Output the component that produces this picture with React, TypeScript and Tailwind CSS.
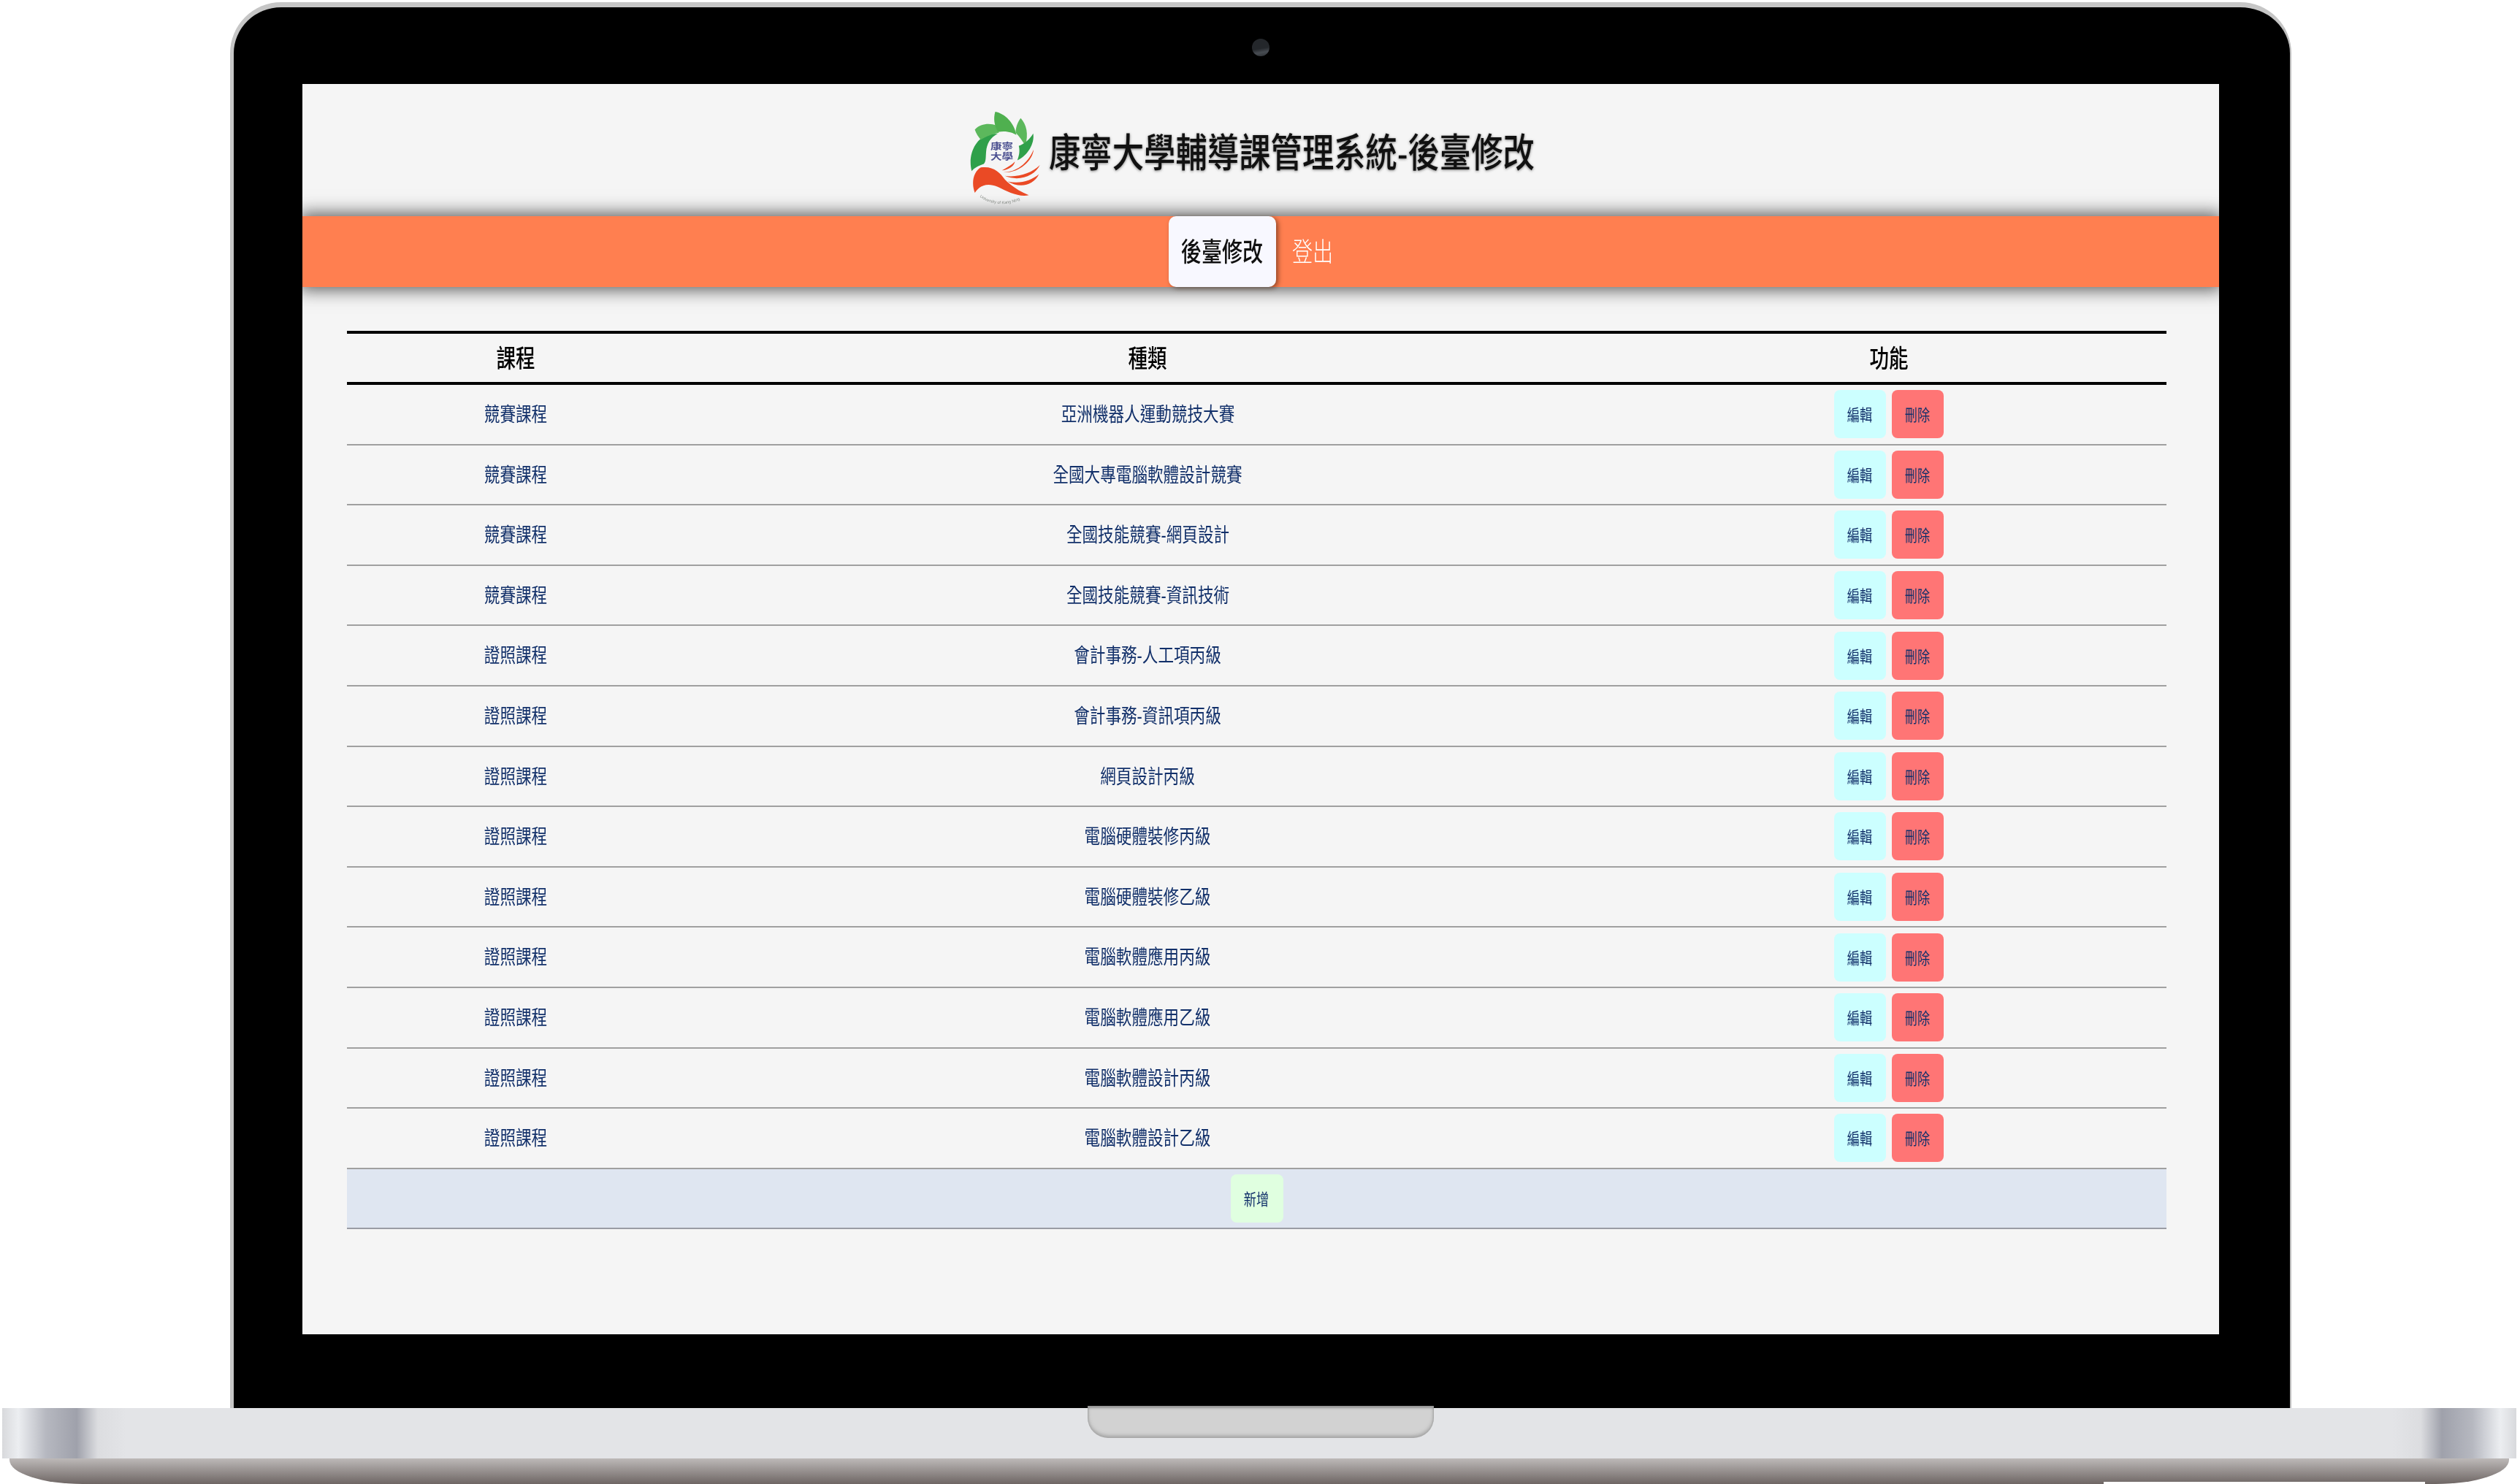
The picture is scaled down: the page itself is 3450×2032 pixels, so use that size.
const FONT = "font-['Liberation_Sans','Noto_Sans_CJK_TC',sans-serif]";

const rows: [string, string][] = [
  ["競賽課程", "亞洲機器人運動競技大賽"],
  ["競賽課程", "全國大專電腦軟體設計競賽"],
  ["競賽課程", "全國技能競賽-網頁設計"],
  ["競賽課程", "全國技能競賽-資訊技術"],
  ["證照課程", "會計事務-人工項丙級"],
  ["證照課程", "會計事務-資訊項丙級"],
  ["證照課程", "網頁設計丙級"],
  ["證照課程", "電腦硬體裝修丙級"],
  ["證照課程", "電腦硬體裝修乙級"],
  ["證照課程", "電腦軟體應用丙級"],
  ["證照課程", "電腦軟體應用乙級"],
  ["證照課程", "電腦軟體設計丙級"],
  ["證照課程", "電腦軟體設計乙級"],
];

function Logo() {
  return (
    <svg viewBox="55 35 295 410" className="mt-[37px] h-[135px] w-[97px] shrink-0 blur-[0.6px]">
      <path d="M62 285 C45 220 75 150 135 130 L170 130 C140 145 125 170 122 205 C120 230 122 245 112 255 C90 262 72 272 62 285 Z" fill="#2fa04a" />
      <path d="M75 112 C100 85 140 85 165 95 L175 125 C150 130 120 140 100 155 C90 142 80 128 75 112 Z" fill="#5cb85c" />
      <path d="M160 38 C200 45 240 85 248 135 C235 125 205 115 172 122 C155 95 152 65 160 38 Z" fill="#4fb04f" />
      <path d="M266 64 C290 90 300 130 285 180 C275 160 260 140 245 125 C245 105 252 82 266 64 Z" fill="#5cb85c" />
      <path d="M318 128 C325 170 295 220 252 240 C262 215 262 195 258 180 C285 170 305 150 318 128 Z" fill="#2fa04a" />
      <path d="M75 375 C58 330 72 285 100 270 C150 262 180 290 200 320 C225 345 260 370 300 385 C260 395 210 370 170 350 C130 335 100 340 75 375 Z" fill="#ea4a25" />
      <path d="M188 282 C215 280 240 262 242 245 C230 258 208 270 188 282 Z" fill="#ea4a25" />
      <path d="M192 290 C245 290 295 255 320 195 C315 245 255 295 192 290 Z" fill="#ea4a25" />
      <path d="M200 305 C255 312 310 295 346 260 C325 305 260 330 200 305 Z" fill="#ea4a25" />
      <path d="M212 328 C262 340 310 325 342 298 C320 345 262 358 212 328 Z" fill="#ea4a25" />
      <text x="140" y="195" fontSize="38" textLength="95" lengthAdjust="spacingAndGlyphs" fill="#4a4f90" fontFamily="'Noto Sans CJK TC',sans-serif" fontWeight="700">康寧</text>
      <text x="140" y="238" fontSize="38" textLength="95" lengthAdjust="spacingAndGlyphs" fill="#4a4f90" fontFamily="'Noto Sans CJK TC',sans-serif" fontWeight="700">大學</text>
      <path id="logoArc" d="M95 392 C140 430 240 435 292 384" fill="none" />
      <text fontSize="17" fill="#8a8f8a" fontFamily="'Liberation Sans',sans-serif">
        <textPath href="#logoArc">University of Kang Ning</textPath>
      </text>
    </svg>
  );
}

function Squeezed({ className, children }: { className: string; children: string }) {
  return <span className={`inline-block whitespace-nowrap ${className}`}>{children}</span>;
}

function ActionButton({ className, label }: { className: string; label: string }) {
  return (
    <button className={`flex h-[66px] w-[71px] shrink-0 items-center justify-center overflow-hidden rounded-[8px] pt-[4px] ${className}`}>
      <Squeezed className="scale-x-[0.78] text-[22px] leading-none text-[#12306a] blur-[0.4px]">{label}</Squeezed>
    </button>
  );
}

function Row({ course, kind }: { course: string; kind: string }) {
  return (
    <div className="grid h-[82.6px] grid-cols-[462px_1268px_761px] items-center border-b-2 border-[#a0a0a0]">
      <div className="pt-[2px] text-center">
        <Squeezed className="scale-x-[0.8] text-[27px] text-[#12306a] blur-[0.3px]">{course}</Squeezed>
      </div>
      <div className="pt-[2px] text-center">
        <Squeezed className="scale-x-[0.8] text-[27px] text-[#12306a] blur-[0.3px]">{kind}</Squeezed>
      </div>
      <div className="flex justify-center gap-[8px]">
        <ActionButton className="bg-[#ccffff]" label="編輯" />
        <ActionButton className="bg-[#ff7575]" label="刪除" />
      </div>
    </div>
  );
}

export default function App() {
  return (
    <div className={`h-[2032px] w-[3450px] overflow-hidden bg-white ${FONT}`}>
      <div className="ml-[315px] mt-[3px] h-[1925px] w-[2822px] rounded-t-[70px] border-x-[5px] border-t-[7px] border-[#c6c6c6] border-r-2 border-r-[#bdbdbd] bg-black pl-[94px] pt-[105px]">
        <div className="relative w-[2624px]">
          <div className="absolute left-1/2 top-[-62px] h-[24px] w-[24px] -translate-x-1/2 rounded-full bg-[linear-gradient(170deg,#24272b_55%,#474c52_75%,#2c2f33)]" />
        </div>
        <div className="h-[1712px] w-[2624px] overflow-hidden bg-[#f5f5f5]">
          <header className="flex h-[181px] items-start justify-center pr-[25px]">
            <Logo />
            <div className="ml-[11px] mt-[68px] w-[663px]">
              <span className="inline-block origin-left scale-x-[0.803] whitespace-nowrap text-[54px] font-medium leading-none text-[#111] blur-[0.4px] [text-shadow:0_1px_4px_#777]">
                康寧大學輔導課管理系統-後臺修改
              </span>
            </div>
          </header>
          <nav className="flex h-[97px] justify-center bg-[#ff7f50] pr-[5px] shadow-[0_0_22px_4px_rgba(40,40,40,0.75)]">
            <div className="flex w-[147px] items-center justify-center overflow-hidden rounded-[10px] bg-[#f8f8ff] pt-[2px] shadow-[3px_2px_6px_rgba(60,30,10,0.55)]">
              <Squeezed className="scale-x-[0.78] text-[36px] font-medium text-[#111] blur-[0.3px]">後臺修改</Squeezed>
            </div>
            <div className="flex w-[100px] items-center justify-center pt-[2px]">
              <Squeezed className="scale-x-[0.78] text-[36px] font-light text-white blur-[0.3px]">登出</Squeezed>
            </div>
          </nav>
          <main className="ml-[61px] mt-[60px] w-[2491px]">
            <div className="grid h-[74px] grid-cols-[462px_1268px_761px] items-center border-y-4 border-black pt-[2px]">
              <div className="text-center"><Squeezed className="scale-x-[0.78] text-[34px] font-medium text-black">課程</Squeezed></div>
              <div className="text-center"><Squeezed className="scale-x-[0.78] text-[34px] font-medium text-black">種類</Squeezed></div>
              <div className="text-center"><Squeezed className="scale-x-[0.78] text-[34px] font-medium text-black">功能</Squeezed></div>
            </div>
            {rows.map(([course, kind], i) => (
              <Row key={i} course={course} kind={kind} />
            ))}
            <div className="flex h-[82px] items-center justify-center border-b-2 border-[#9a9ca4] bg-[#dfe6f1]">
              <ActionButton className="w-[72px] bg-[#e0ffe0]" label="新增" />
            </div>
          </main>
        </div>
      </div>
      <div className="relative ml-[3px] h-[104px] w-[3442px]">
        <div className="h-[69px] bg-[linear-gradient(90deg,#d8d9dc_0px,#eceef1_22px,#b6b8c0_60px,#9fa1ab_102px,#dcdde0_131px,#e3e4e7_170px,#e3e4e7_3272px,#dcdde0_3311px,#9fa1ab_3340px,#b6b8c0_3382px,#eceef1_3420px,#d8d9dc_3442px)]" />
        <div className="mx-[10px] h-[35px] rounded-b-[100px_33px] bg-[linear-gradient(180deg,#bdb9b8,#6e6664)]" />
        <div className="absolute left-[1486px] top-[-3px] h-[44px] w-[474px] rounded-b-[28px] bg-[#d2d2d2] shadow-[inset_0_-3px_5px_rgba(120,120,120,0.55),inset_0_3px_3px_rgba(90,90,90,0.5)]" />
        <div className="absolute bottom-0 left-[2877px] h-[3px] w-[440px] bg-white" />
      </div>
    </div>
  );
}
